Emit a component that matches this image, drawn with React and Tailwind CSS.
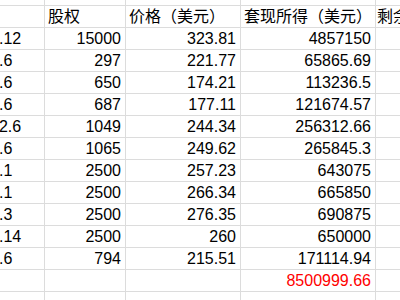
import React from 'react';

// 表格数据：日期（左列被截断）、股权、价格、套现所得
const rows = [
  ['2023.1.12', '15000', '323.81', '4857150'],
  ['2023.2.6', '297', '221.77', '65865.69'],
  ['2023.3.6', '650', '174.21', '113236.5'],
  ['2023.4.6', '687', '177.11', '121674.57'],
  ['2022.12.6', '1049', '244.34', '256312.66'],
  ['2023.5.6', '1065', '249.62', '265845.3'],
  ['2023.6.1', '2500', '257.23', '643075'],
  ['2023.7.1', '2500', '266.34', '665850'],
  ['2023.8.3', '2500', '276.35', '690875'],
  ['2023.9.14', '2500', '260', '650000'],
  ['2023.8.6', '794', '215.51', '171114.94'],
];

const line = 'border-[#dcdcdc]';

function Row({ a = '', b = '', c = '', d = '', e = '', height = 'h-[22px]', dClass = '' }) {
  return (
    <div className={`flex ${height} border-b ${line} leading-[21px]`}>
      <div className={`w-[100px] shrink-0 border-r ${line} pl-[5px] overflow-hidden whitespace-nowrap`}>{a}</div>
      <div className={`w-[81px] shrink-0 border-r ${line} pl-[3px] pr-[4px] text-right whitespace-nowrap`}>{b}</div>
      <div className={`w-[115px] shrink-0 border-r ${line} pr-[4px] text-right whitespace-nowrap`}>{c}</div>
      <div className={`w-[135px] shrink-0 border-r ${line} pr-[4px] text-right whitespace-nowrap ${dClass}`}>{d}</div>
      <div className="w-[100px] shrink-0 pl-[1px] whitespace-nowrap overflow-hidden">{e}</div>
    </div>
  );
}

export default function App() {
  return (
    <div
      className="w-[400px] h-[300px] overflow-hidden bg-white text-black text-[16px]"
      style={{ fontFamily: '"Liberation Sans", "Noto Sans CJK SC", sans-serif' }}
    >
      <div className="-ml-[55px] flex flex-col">
        <Row height="h-[6px]" />
        <div className={`flex h-[22px] border-b ${line} leading-[21px]`}>
          <div className={`w-[100px] shrink-0 border-r ${line}`}></div>
          <div className={`w-[81px] shrink-0 border-r ${line} pl-[3px] whitespace-nowrap`}>股权</div>
          <div className={`w-[115px] shrink-0 border-r ${line} pl-[3px] whitespace-nowrap overflow-hidden`}>价格（美元）</div>
          <div className={`w-[135px] shrink-0 border-r ${line} pl-[3px] whitespace-nowrap overflow-hidden`}>套现所得（美元）</div>
          <div className="w-[100px] shrink-0 pl-[1px] whitespace-nowrap overflow-hidden">剩余股权</div>
        </div>
        {rows.map((r, i) => (
          <Row key={i} a={r[0]} b={r[1]} c={r[2]} d={r[3]} />
        ))}
        <Row d="8500999.66" dClass="text-[#ff0000]" />
        <Row />
      </div>
    </div>
  );
}
